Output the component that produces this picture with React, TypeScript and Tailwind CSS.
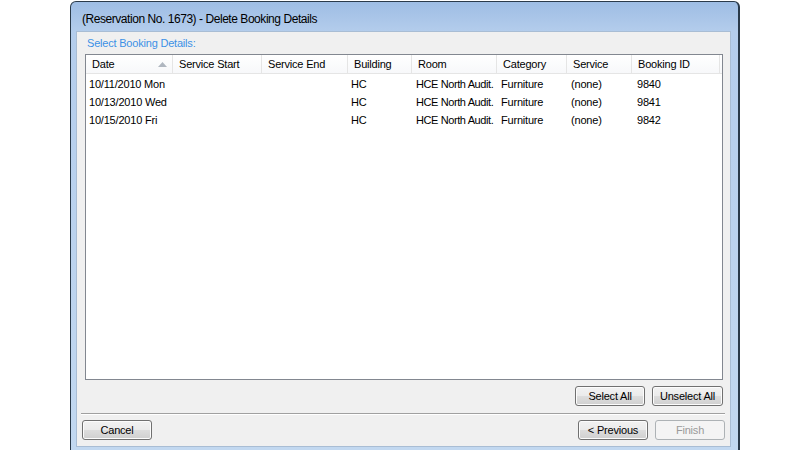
import React from "react";

type Column = { label: string; width: string; sorted?: boolean };

const columns: Column[] = [
  { label: "Date", width: "w-[87px]", sorted: true },
  { label: "Service Start", width: "w-[89px]" },
  { label: "Service End", width: "w-[86px]" },
  { label: "Building", width: "w-[64px]" },
  { label: "Room", width: "w-[85px]" },
  { label: "Category", width: "w-[70px]" },
  { label: "Service", width: "w-[65px]" },
  { label: "Booking ID", width: "w-[88px]" },
];

const bookings = [
  { date: "10/11/2010 Mon", start: "", end: "", building: "HC", room: "HCE North Audit.", category: "Furniture", service: "(none)", id: "9840" },
  { date: "10/13/2010 Wed", start: "", end: "", building: "HC", room: "HCE North Audit.", category: "Furniture", service: "(none)", id: "9841" },
  { date: "10/15/2010 Fri", start: "", end: "", building: "HC", room: "HCE North Audit.", category: "Furniture", service: "(none)", id: "9842" },
];

const WinButton = ({ label, width, disabled }: { label: string; width: string; disabled?: boolean }) => (
  <button
    disabled={disabled}
    className={
      disabled
        ? `${width} h-[20px] rounded-[3px] border border-[#adb2b5] bg-[#f4f4f4] text-[#9a9a9a] text-[11px] leading-none tracking-[-0.2px]`
        : `${width} h-[20px] rounded-[3px] border border-[#707070] bg-[linear-gradient(to_bottom,#f2f2f2_0%,#ebebeb_48%,#dddddd_52%,#cfcfcf_100%)] text-black text-[11px] leading-none tracking-[-0.2px] shadow-[inset_0_0_0_1px_#fcfcfc]`
    }
  >
    {label}
  </button>
);

export default function App() {
  return (
    <div className="w-[812px] h-[450px] bg-white flex overflow-hidden font-['Liberation_Sans',Arial,sans-serif]">
      <div className="ml-[70px] w-[670px] h-[451px] mt-[1px] flex flex-col rounded-t-[6px] border-l border-t border-r-2 border-[#2a3a4a] bg-[linear-gradient(to_bottom,#9ebde4_0px,#b4cdec_30px,#c2d8f0_100%)] pl-[5px] pr-[7px] pb-[5px]">
        {/* title bar */}
        <div className="h-[29px] flex items-center pl-[6px] pt-[4px] text-[12px] tracking-[-0.45px] text-black">
          (Reservation No. 1673) - Delete Booking Details
        </div>

        {/* client area */}
        <div className="flex-1 bg-[#f0f0f0] border border-[#a9bdd4] flex flex-col">
          <div className="pl-[10px] pt-[3px] h-[22px] text-[11px] tracking-[-0.2px] text-[#3c91e6]">Select Booking Details:</div>

          <div className="ml-[8px] w-[638px] h-[326px] bg-white border border-[#828790] flex flex-col">
            <div className="h-[19px] flex border-b border-[#e5e5e5] bg-[linear-gradient(to_bottom,#ffffff,#f7f8fa)]">
              {columns.map((c) => (
                <div
                  key={c.label}
                  className={`${c.width} h-full flex items-center justify-between pl-[6px] pr-[5px] border-r border-[#e5e5e5] text-[11px] tracking-[-0.2px] text-black`}
                >
                  <span>{c.label}</span>
                  {c.sorted && (
                    <svg width="9" height="5" viewBox="0 0 9 5">
                      <path d="M0 5 L4.5 0 L9 5 Z" fill="#b0b7c0" />
                    </svg>
                  )}
                </div>
              ))}
            </div>

            <div className="pt-[1px] flex flex-col text-[11px] tracking-[-0.2px] text-black">
              {bookings.map((b) => (
                <div key={b.id} className="h-[18px] flex items-center">
                  <div className="w-[87px] pl-[3px] whitespace-nowrap">{b.date}</div>
                  <div className="w-[89px] pl-[3px]">{b.start}</div>
                  <div className="w-[86px] pl-[3px]">{b.end}</div>
                  <div className="w-[64px] pl-[3px]">{b.building}</div>
                  <div className="w-[85px] pl-[4px] whitespace-nowrap tracking-[-0.4px]">{b.room}</div>
                  <div className="w-[70px] pl-[4px]">{b.category}</div>
                  <div className="w-[65px] pl-[4px]">{b.service}</div>
                  <div className="w-[88px] pl-[5px]">{b.id}</div>
                </div>
              ))}
            </div>
          </div>

          <div className="mt-[6px] w-[646px] flex justify-end gap-[7px]">
            <WinButton label="Select All" width="w-[70px]" />
            <WinButton label="Unselect All" width="w-[71px]" />
          </div>

          <div className="mt-[7px] ml-[4px] w-[644px] h-[2px] border-t border-b border-t-[#a0a0a0] border-b-white" />

          <div className="mt-[5px] pl-[5px] w-[648px] flex items-center">
            <WinButton label="Cancel" width="w-[70px]" />
            <div className="flex-1" />
            <div className="flex gap-[7px]">
              <WinButton label="< Previous" width="w-[70px]" />
              <WinButton label="Finish" width="w-[70px]" disabled />
            </div>
          </div>
        </div>
      </div>
    </div>
  );
}
